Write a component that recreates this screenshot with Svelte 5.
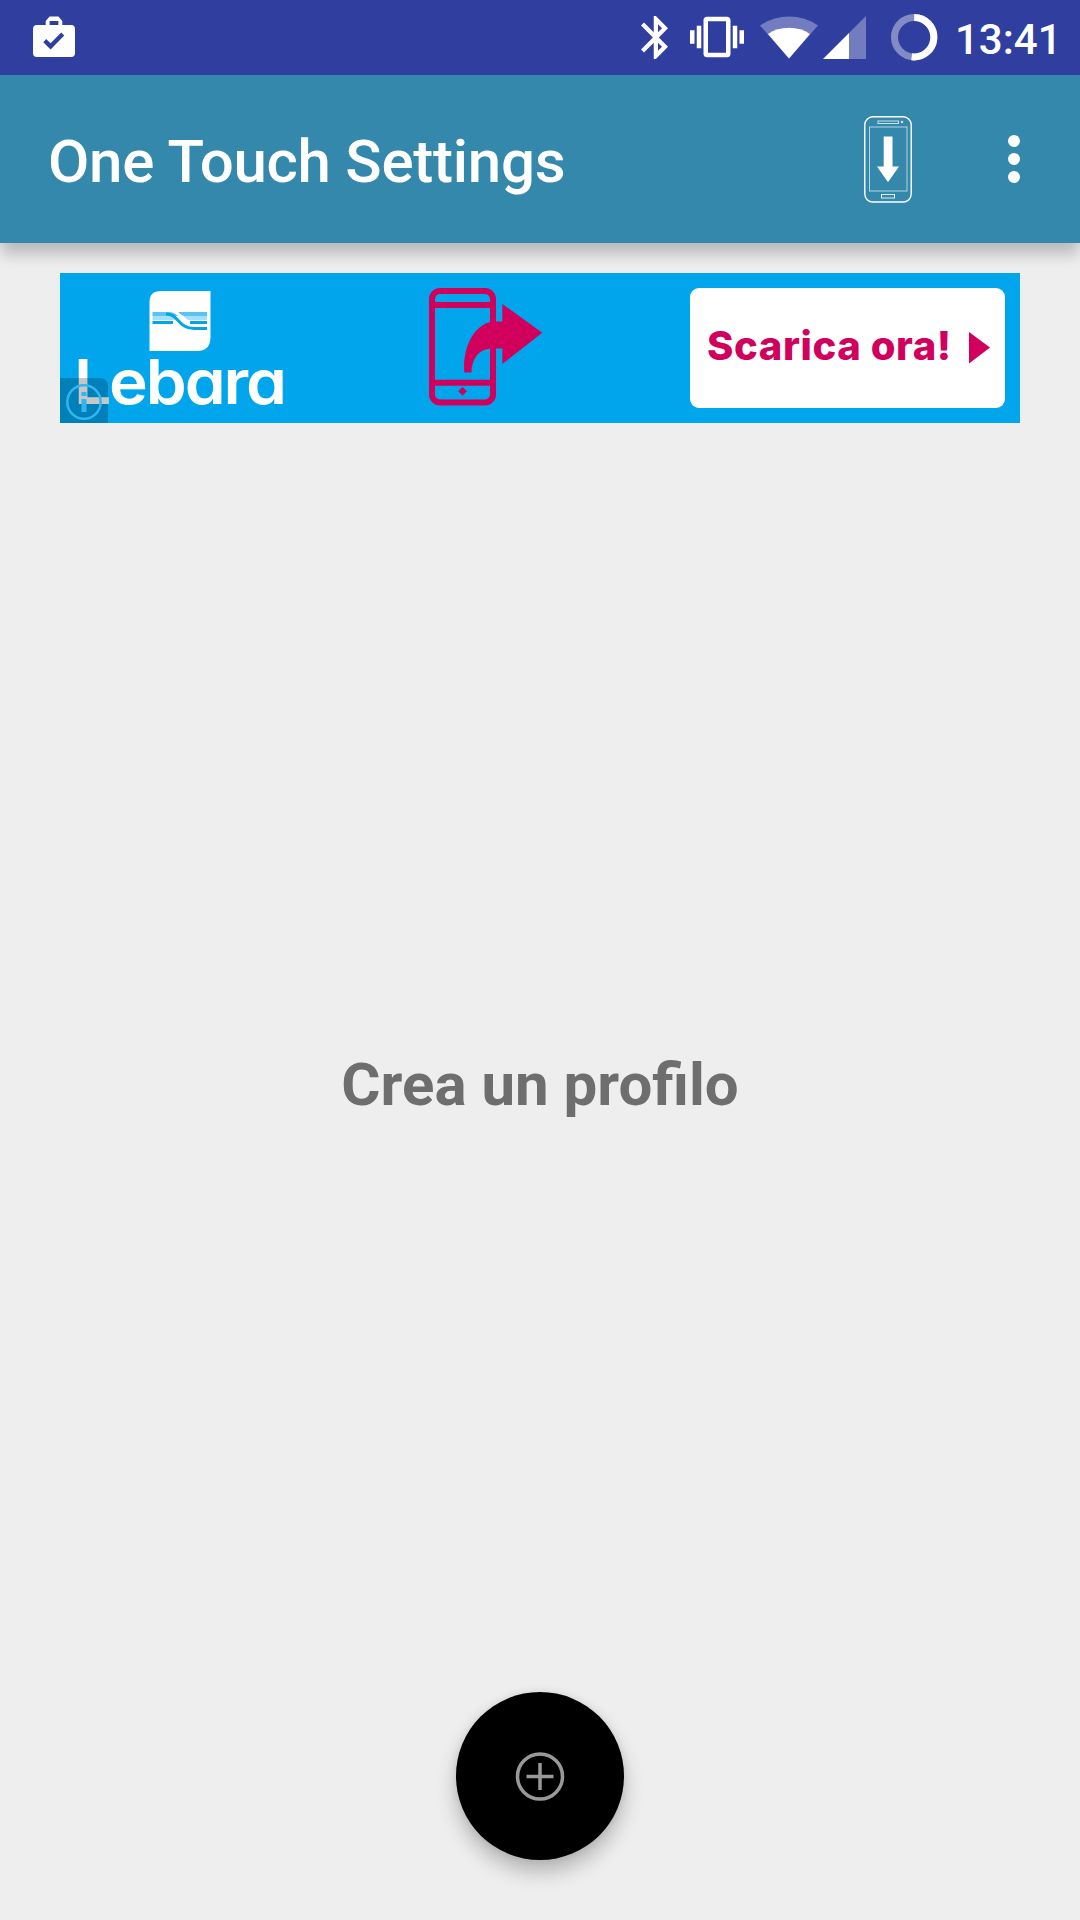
<script>
  let clock = '13:41'
  let title = 'One Touch Settings'
  let emptyText = 'Crea un profilo'
  let ad = { brand: 'Lebara', cta: 'Scarica ora!' }
</script>

<div class="screen">
  <div class="status">
    <svg class="bag" width="42" height="41" viewBox="0 0 43 41" preserveAspectRatio="none">
      <path fill="#fff" fill-rule="evenodd" d="M4 9H13V5L17 .5H26L30 5V9H39a4 4 0 0 1 4 4V37a4 4 0 0 1-4 4H4a4 4 0 0 1-4-4V13a4 4 0 0 1 4-4ZM17 5V9H26V5ZM10.500 26.200 18 33.500 32 19.500 28.900 16.500 18 27.200 13.500 23Z" />
    </svg>
    <span class="grow"></span>
    <svg class="bt" width="27" height="43" viewBox="5 2 12.710 20" preserveAspectRatio="none">
      <path fill="#fff" d="M17.710 7.710L12 2h-1v7.590L6.410 5 5 6.410 10.590 12 5 17.590 6.410 19 11 14.410V22h1l5.710-5.710-4.300-4.290 4.300-4.290zM13 5.830l1.880 1.880L13 9.590V5.830zm1.880 10.460L13 18.170v-3.760l1.880 1.880z" />
    </svg>
    <svg class="vib" width="54" height="42" viewBox="0 2.700 24 18.600">
      <path fill="#fff" d="M0 15h2V9H0v6zm3 2h2V7H3v10zm19-8v6h2V9h-2zm-3 8h2V7h-2v10zM16.500 3h-9C6.670 3 6 3.670 6 4.500v15c0 .83.67 1.500 1.500 1.500h9c.83 0 1.500-.67 1.500-1.500v-15c0-.83-.67-1.500-1.500-1.500zM16 19H8V5h8v14z" />
    </svg>
    <svg class="wifi" width="58" height="43" viewBox="0 0 58 43">
      <path fill="#fff" fill-opacity=".32" d="M29 42.500 0 9.500Q13 .5 29 .5T58 9.500Z" />
      <path fill="#fff" d="M29 42.500 8 18Q17 11.700 29 11.700T50 18Z" />
    </svg>
    <svg class="cell" width="43" height="43" viewBox="0 0 43 43">
      <path fill="#fff" fill-opacity=".32" d="M26 17 43 0V43H26Z" />
      <path fill="#fff" d="M0 43 26 17V43Z" />
    </svg>
    <svg class="battery" width="47" height="47" viewBox="0 0 47 47">
      <circle cx="23.200" cy="23.200" r="19.700" fill="none" stroke="#fff" stroke-opacity=".4" stroke-width="7" />
      <path fill="none" stroke="#fff" stroke-width="7" d="M23.200 3.500A19.700 19.700 0 1 1 20.700 42.750" />
    </svg>
    <span class="clock">{clock}</span>
  </div>

  <header class="bar">
    <h1>{title}</h1>
    <svg class="phone" width="48" height="87" viewBox="0 0 48 87">
      <g fill="none" stroke="#fff">
        <rect x=".8" y=".8" width="46.400" height="85.200" rx="8" stroke-width="1.400" />
        <rect x="5.500" y="11" width="37.500" height="64" stroke-opacity=".65" />
        <rect x="14" y="5" width="20.500" height="2.500" stroke-opacity=".75" />
        <rect x="17.500" y="78.500" width="13" height="3.500" stroke-opacity=".85" />
      </g>
      <circle cx="38" cy="6" r="1.300" fill="#fff" fill-opacity=".75" />
      <path fill="#fff" d="M19.700 20.500H28.500V50.500H35L24 66.300 13 50.500H19.700Z" />
    </svg>
    <svg class="more" width="12" height="48" viewBox="0 0 12 48">
      <g fill="#fff">
        <circle cx="6" cy="6" r="6" />
        <circle cx="6" cy="24" r="6" />
        <circle cx="6" cy="42" r="6" />
      </g>
    </svg>
  </header>

  <main>
    <section class="ad">
      <svg class="brand" width="230" height="150" viewBox="0 0 230 150">
        <path fill="#fff" d="M101 18H150.500V64Q150.500 78 137 78H89.500V29Q89.500 18 101 18Z" />
        <path fill="#00a5ec" fill-opacity=".65" d="M92.500 39H109Q114 39 118 43H92.500ZM118 39H147V43H124Q121 42 118 39Z" />
        <path fill="#00a5ec" fill-opacity=".35" d="M92.500 43H116L118 47H92.500ZM123 43H147V47H128Z" />
        <path fill="none" stroke="#00a5ec" stroke-width="3" d="M92.500 49.500H113M106 41C119 41 118 55.500 134 55.500H147M130 49.500H147" />
        <text x="14" y="131" textLength="211" lengthAdjust="spacingAndGlyphs">{ad.brand}</text>
      </svg>
      <svg class="share" width="114" height="118" viewBox="0 0 114 118">
        <g fill="none" stroke="#d1005d" stroke-width="6">
          <rect x="3" y="3" width="61" height="111.500" rx="8" />
          <path d="M3 17H64M3 94.800H64" />
        </g>
        <path fill="#d1005d" d="M73.300 16 113.300 44.700 73.300 76V60.500H64C50 60.500 43 70 42.500 84.500H35.300C33 58 47 33.500 66 33.500H73.300ZM33.500 99 38 103.300 33.500 107.600 29.200 103.300Z" />
      </svg>
      <button class="cta">
        <span>{ad.cta}</span>
        <svg width="22" height="32" viewBox="0 0 22 32"><path fill="#d1005d" d="M1 0 22 15.500 1 31.500Z" /></svg>
      </button>
      <span class="info">
        <svg width="36" height="36" viewBox="0 0 36 36">
          <g fill="none" stroke="#33b5f0" stroke-width="2.500">
            <circle cx="18" cy="18" r="16.700" />
            <path stroke-width="5" d="M18 15V28M18 8V12" />
          </g>
        </svg>
      </span>
    </section>

    <p class="empty">{emptyText}</p>

    <button class="fab" aria-label="+">
      <svg width="50" height="50" viewBox="0 0 50 50">
        <g fill="none" stroke="#999" stroke-width="3.500">
          <circle cx="25" cy="25.500" r="22.500" />
          <path d="M25 12V39M11.500 25.500H38.500" />
        </g>
      </svg>
    </button>
  </main>
</div>

<style>
  :global(body) { background: #eee; }

  .screen {
    width: 1080px;
    height: 1920px;
    display: flex;
    flex-direction: column;
    overflow: hidden;
    background: #eee;
    font-family: Roboto, sans-serif;
  }
  svg { display: block; flex: none; }
  button { border: 0; padding: 0; font-family: inherit; }

  .status {
    height: 75px;
    flex: none;
    box-sizing: border-box;
    display: flex;
    align-items: flex-start;
    padding: 16px 24px 0 33px;
    background: #303f9f;
    color: #fff;
  }
  .grow { flex: 1; }
  .vib { margin-left: 22px; }
  .wifi { margin-left: 16px; }
  .cell { margin-left: 5px; }
  .battery { margin: -2px 0 0 25px; }
  .clock {
    width: 101px;
    margin-left: 17px;
    font-size: 42px;
    font-weight: 500;
    line-height: 48px;
    white-space: nowrap;
  }

  .bar {
    height: 168px;
    flex: none;
    box-sizing: border-box;
    display: flex;
    align-items: center;
    padding: 0 60px 0 48px;
    background: #3388ab;
    color: #fff;
    box-shadow: 0 12px 14px -1px rgba(0, 0, 0, 0.22);
  }
  h1 {
    flex: 1;
    margin: 5px 0 0;
    font-size: 60px;
    font-weight: 500;
    line-height: 70px;
    letter-spacing: -0.25px;
  }
  .more { margin-left: 96px; }

  main {
    flex: 1;
    display: flex;
    flex-direction: column;
    align-items: center;
    padding: 30px 60px 60px;
  }

  .ad {
    position: relative;
    width: 960px;
    height: 150px;
    display: flex;
    align-items: center;
    background: #00a5ec;
  }
  .brand text {
    font-family: Inter, sans-serif;
    font-feature-settings: 'cv11';
    font-size: 62px;
    font-weight: 600;
    fill: #fff;
    letter-spacing: -2px;
  }
  .share { margin: -2px 0 0 139px; }
  .cta {
    width: 315px;
    height: 120px;
    box-sizing: border-box;
    margin-left: auto;
    margin-right: 15px;
    padding: 0 15px 0 17px;
    display: flex;
    align-items: center;
    justify-content: space-between;
    border-radius: 9px;
    background: #fff;
    color: #d1005d;
    font-family: Inter, sans-serif;
    font-size: 40px;
    font-weight: 800;
    letter-spacing: 0.6px;
    white-space: nowrap;
  }
  .cta span { margin-top: -5px; }
  .info {
    position: absolute;
    left: 0;
    bottom: 0;
    width: 48px;
    height: 45px;
    display: flex;
    align-items: center;
    justify-content: center;
    padding-top: 3px;
    box-sizing: border-box;
    border-top-right-radius: 8px;
    background: rgba(0, 0, 0, 0.22);
  }

  .empty {
    margin: 627px 0 0;
    color: #6e6e6e;
    font-size: 60px;
    font-weight: 700;
    line-height: 70px;
  }

  .fab {
    width: 168px;
    height: 168px;
    margin-top: auto;
    display: flex;
    align-items: center;
    justify-content: center;
    border-radius: 50%;
    background: #000;
    box-shadow: 0 12px 20px rgba(0, 0, 0, 0.24), 0 0 8px rgba(0, 0, 0, 0.08);
  }
</style>
